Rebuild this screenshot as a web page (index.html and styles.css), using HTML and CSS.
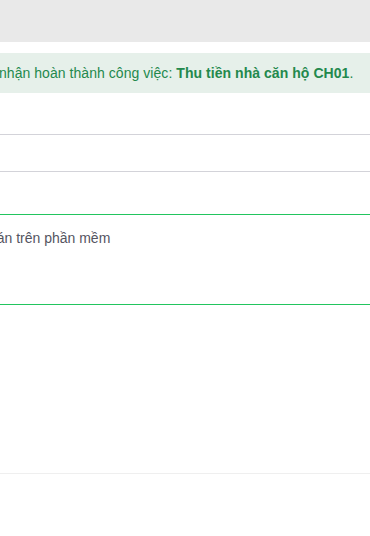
FILE: index.html
```html
<!DOCTYPE html>
<html lang="vi">
<head>
    <meta charset="UTF-8">
    <meta name="viewport" content="width=device-width, initial-scale=1.0">
    <title>Xác nhận hoàn thành công việc</title>
    <link rel="stylesheet" href="styles.css">
</head>
<body>
    <div class="topbar"></div>
    <div class="page">
        <div class="alert">
            <span class="alert-text">nhận hoàn thành công việc: <b>Thu tiền nhà căn hộ CH01</b>.</span>
        </div>
        <div class="form">
            <div class="field field-one"></div>
            <div class="field field-two"></div>
            <div class="field-gap"></div>
            <div class="note">
                <span class="note-text">toán trên phần mềm</span>
            </div>
        </div>
        <div class="spacer"></div>
    </div>
    <div class="footer"></div>
</body>
</html>
```

FILE: styles.css
```css
*
{
    box-sizing: border-box;
}
body
{
    margin: 0;
    background: #fff;
    font-family: "Liberation Sans", Arial, Helvetica, sans-serif;
    font-size: 14px;
    overflow: hidden;
}
.topbar
{
    height: 42px;
    background: #e9e9e9;
}
.page
{
    padding-top: 11px;
}
.alert
{
    height: 40px;
    background: #e6f0ea;
    color: #23894d;
    display: flex;
    align-items: center;
    white-space: nowrap;
    overflow: hidden;
}
.alert-text
{
    margin-left: -1px;
    letter-spacing: 0.05px;
}
.alert b
{
    font-weight: bold;
}
.field
{
    border-bottom: 1px solid #d3d3d9;
}
.field-one
{
    height: 42px;
}
.field-two
{
    height: 37px;
}
.field-gap
{
    height: 42px;
}
.note
{
    height: 91px;
    border-top: 1px solid #22c55e;
    border-bottom: 1px solid #22c55e;
    color: #55555f;
    padding-top: 15px;
    white-space: nowrap;
    overflow: hidden;
}
.note-text
{
    display: inline-block;
    margin-left: -15px;
}
.spacer
{
    height: 169px;
    border-bottom: 1px solid #efefef;
}
.footer
{
    height: 80px;
    background: #fff;
}
```
